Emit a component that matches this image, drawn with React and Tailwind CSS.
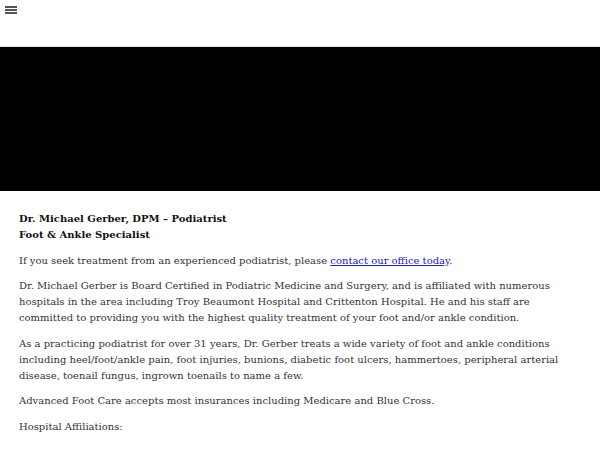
import React from "react";

export default function App() {
  return (
    <div className="min-h-[450px] bg-white text-[#333]" style={{ fontFamily: '"DejaVu Serif", serif' }}>
      <header className="h-[47px] border-b border-[#e5e5e5] px-[5px] pt-[6px]">
        <button className="flex flex-col gap-[1px] w-[12px]">
          <span className="block h-[2px] w-full bg-[#555]" />
          <span className="block h-[2px] w-full bg-[#555]" />
          <span className="block h-[2px] w-full bg-[#555]" />
        </button>
      </header>
      <div className="h-[144px] bg-black" />
      <main className="px-[19px] pt-[20px] text-[10px] leading-[16px]">
        <p className="font-bold text-[#111]">
          Dr. Michael Gerber, DPM – Podiatrist<br />Foot &amp; Ankle Specialist
        </p>
        <p className="mt-[9.6px]">
          If you seek treatment from an experienced podiatrist, please{" "}
          <a href="#" className="text-[#2020c0] underline">contact our office today</a>.
        </p>
        <p className="mt-[9.6px]">
          Dr. Michael Gerber is Board Certified in Podiatric Medicine and Surgery, and is affiliated with numerous hospitals in the area including Troy Beaumont Hospital and Crittenton Hospital. He and his staff are committed to providing you with the highest quality treatment of your foot and/or ankle condition.
        </p>
        <p className="mt-[9.6px]">
          As a practicing podiatrist for over 31 years, Dr. Gerber treats a wide variety of foot and ankle conditions including heel/foot/ankle pain, foot injuries, bunions, diabetic foot ulcers, hammertoes, peripheral arterial disease, toenail fungus, ingrown toenails to name a few.
        </p>
        <p className="mt-[9.6px]">Advanced Foot Care accepts most insurances including Medicare and Blue Cross.</p>
        <p className="mt-[9.6px]">Hospital Affiliations:</p>
      </main>
    </div>
  );
}
